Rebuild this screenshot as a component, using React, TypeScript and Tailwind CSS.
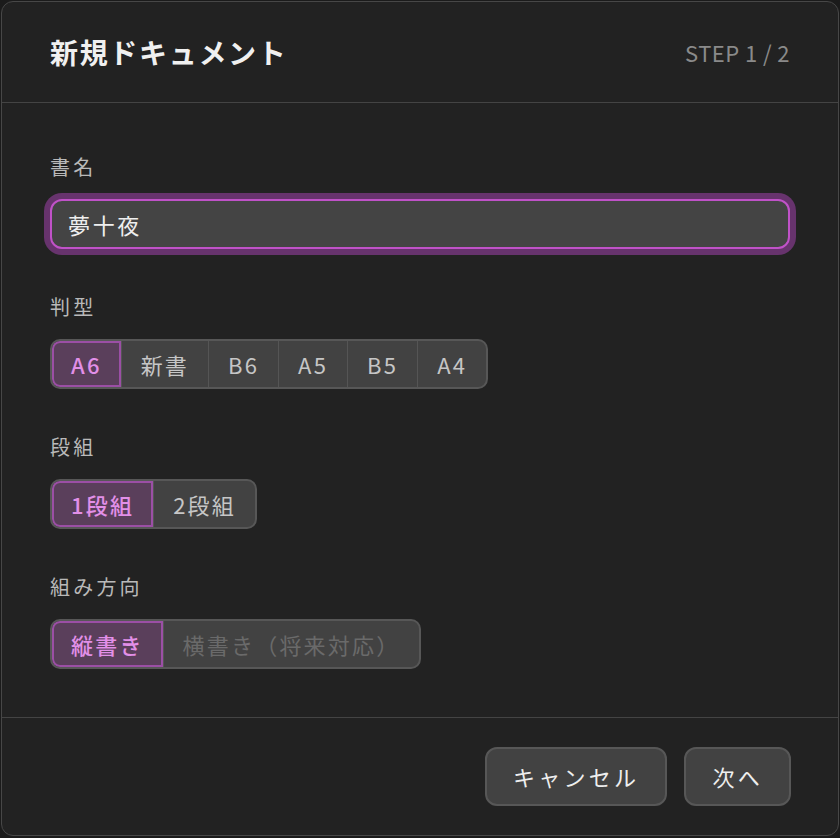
import React, { useState } from "react";

type Option = {
  value: string;
  label: string;
  disabled?: boolean;
};

type SegmentedProps = {
  options: Option[];
  value: string;
  onChange: (v: string) => void;
};

const Segmented: React.FC<SegmentedProps> = ({ options, value, onChange }) => {
  return (
    <div className="inline-flex border-2 border-[#575757] rounded-[10px] bg-[#424242] overflow-hidden">
      {options.map((opt) => {
        const active = opt.value === value;
        return (
          <button
            key={opt.value}
            type="button"
            disabled={opt.disabled}
            onClick={() => onChange(opt.value)}
            className={
              "h-[46px] px-[19px] text-[22px] tracking-[0.1em] leading-none border-l border-[#555] first:border-l-0 first:rounded-l-[8px] last:rounded-r-[8px] " +
              (active
                ? "bg-[#5a3f5b] text-[#e28fe8] font-medium shadow-[inset_0_0_0_2px_#9b4fa5]"
                : opt.disabled
                  ? "text-[#6a6a6a] cursor-not-allowed"
                  : "text-[#c6c6c6] hover:bg-[#4a4a4a]")
            }
          >
            {opt.label}
          </button>
        );
      })}
    </div>
  );
};

const Field: React.FC<{ label: string; children: React.ReactNode }> = ({
  label,
  children,
}) => (
  <div className="flex flex-col items-start">
    <label className="text-[20px] leading-[28px] tracking-[0.16em] text-[#b9b9b9] mb-[18px]">
      {label}
    </label>
    {children}
  </div>
);

export default function App() {
  const [title, setTitle] = useState("夢十夜");
  const [size, setSize] = useState("A6");
  const [columns, setColumns] = useState("1");
  const [direction, setDirection] = useState("vertical");

  return (
    <div className="w-[840px] h-[838px] bg-[#1b1b1b] p-px font-['Noto_Sans_CJK_JP','Noto_Sans',sans-serif]">
      <div className="w-[838px] h-[835px] bg-[#222222] border border-[#474747] rounded-[12px] flex flex-col">
        {/* header */}
        <div className="h-[101px] shrink-0 flex items-center justify-between px-[48px] border-b border-[#444]">
          <h2 className="text-[28px] font-bold tracking-[0.06em] text-[#f0f0f0]">
            新規ドキュメント
          </h2>
          <span className="text-[22px] tracking-[0.02em] text-[#8a8a8a]">
            STEP 1 / 2
          </span>
        </div>

        {/* body */}
        <div className="flex flex-col gap-[44px] px-[48px] pt-[50px] pb-[48px] border-b border-[#444]">
          <Field label="書名">
            <input
              type="text"
              value={title}
              onChange={(e) => setTitle(e.target.value)}
              className="w-full h-[50px] px-4 bg-[#444] border-2 border-[#c052c8] rounded-[12px] text-[22px] tracking-[0.12em] text-[#eeeeee] outline-none shadow-[0_0_0_6px_#67336d]"
            />
          </Field>

          <Field label="判型">
            <Segmented
              value={size}
              onChange={setSize}
              options={["A6", "新書", "B6", "A5", "B5", "A4"].map((s) => ({
                value: s,
                label: s,
              }))}
            />
          </Field>

          <Field label="段組">
            <Segmented
              value={columns}
              onChange={setColumns}
              options={[
                { value: "1", label: "1段組" },
                { value: "2", label: "2段組" },
              ]}
            />
          </Field>

          <Field label="組み方向">
            <Segmented
              value={direction}
              onChange={setDirection}
              options={[
                { value: "vertical", label: "縦書き" },
                { value: "horizontal", label: "横書き（将来対応）", disabled: true },
              ]}
            />
          </Field>
        </div>

        {/* footer */}
        <div className="flex justify-end gap-[17px] px-[47px] py-[29px]">
          <button
            type="button"
            className="h-[59px] px-[26px] bg-[#424242] border-2 border-[#575757] rounded-[12px] text-[22px] tracking-[0.15em] text-[#eeeeee] hover:bg-[#4a4a4a]"
          >
            キャンセル
          </button>
          <button
            type="button"
            className="h-[59px] px-[26px] bg-[#424242] border-2 border-[#575757] rounded-[12px] text-[22px] tracking-[0.15em] text-[#eeeeee] hover:bg-[#4a4a4a]"
          >
            次へ
          </button>
        </div>
      </div>
    </div>
  );
}
